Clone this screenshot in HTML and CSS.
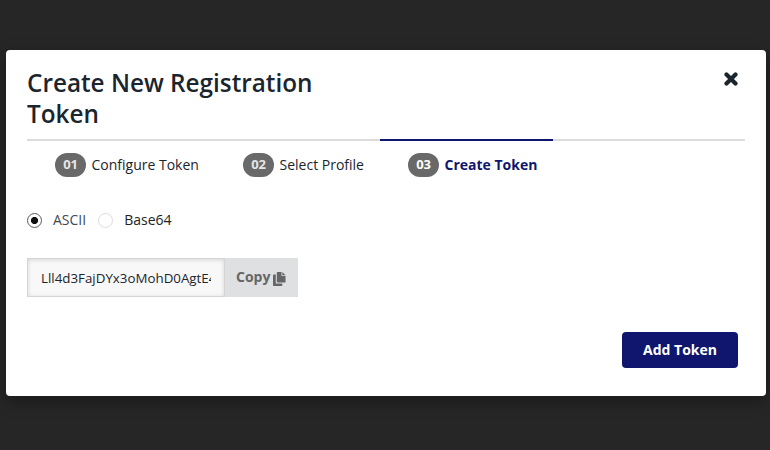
FILE: index.html
```html
<!DOCTYPE html>
<html lang="en">
<head>
<meta charset="utf-8">
<title>Create New Registration Token</title>
<link rel="stylesheet" href="styles.css">
</head>
<body>
<main class="modal">
  <header class="header">
    <h1 class="title">Create New Registration Token</h1>
    <button class="close" aria-label="Close"><svg width="14" height="14" viewBox="0 0 14 14"><path d="M2.500 2.500 11.500 11.500M11.500 2.500 2.500 11.500" stroke="#1b252d" stroke-width="4.200" stroke-linecap="round"/></svg></button>
  </header>
  <ol class="steps">
    <li class="step step-one"><span class="num">01</span><span class="label">Configure Token</span></li>
    <li class="step step-two"><span class="num">02</span><span class="label">Select Profile</span></li>
    <li class="step step-three active"><span class="num">03</span><span class="label">Create Token</span></li>
    <li class="rest"></li>
  </ol>
  <div class="formats">
    <span class="radio checked"></span><span class="format selected">ASCII</span>
    <span class="radio"></span><span class="format">Base64</span>
  </div>
  <div class="token">
    <div class="field"><span class="value">Lll4d3FajDYx3oMohD0AgtE4</span></div>
    <button class="copy"><span>Copy</span><svg width="13" height="14" viewBox="0 0 13 14" fill="#666"><path d="M4.500 0H8.500V4H12.500V10.500H4.500Q3.800 10.500 3.800 9.800V.7Q3.800 0 4.500 0Z"/><path d="M9.300 0 12.500 3.200H9.300Z"/><path d="M.8 2.500H2.800V11.500H9.300V13.200Q9.300 14 8.500 14H.8Q0 14 0 13.200V3.300Q0 2.500 .8 2.500Z"/></svg></button>
  </div>
  <footer class="footer"><button class="add">Add Token</button></footer>
</main>
</body>
</html>
```
FILE: styles.css
```css
* { box-sizing: border-box; }
body {
  margin: 0;
  height: 450px;
  overflow: hidden;
  padding: 50px 4px 54px 6px;
  background: #262626;
  color: #1b252d;
  font: 14px/20px "Open Sans", sans-serif;
}
button { border: 0; padding: 0; font: inherit; }
.modal {
  height: 346px;
  padding: 17px 21px 0;
  background: #fff;
  border-radius: 4px;
  box-shadow: 0 5px 15px rgba(0, 0, 0, .35);
}
.header { display: flex; justify-content: space-between; height: 72px; }
.title { margin: 0; width: 310px; font-size: 24.300px; line-height: 31px; font-weight: 600; }
.close { height: 14px; margin: 5px 7px 0 0; background: none; }
.close svg { display: block; }
.steps { display: flex; height: 38px; margin: 0; padding: 0; list-style: none; }
.step {
  display: flex;
  align-items: flex-start;
  gap: 5.5px;
  padding: 12px 0 0 28px;
  border-top: 2px solid #dcdcdc;
  white-space: nowrap;
}
.step-one { width: 188px; }
.step-two { width: 165px; }
.step-three { width: 173px; }
.rest { flex: 1; border-top: 2px solid #dcdcdc; }
.num {
  width: 31px;
  height: 24px;
  border-radius: 12px;
  background: #696969;
  color: #e6e6e6;
  font-size: 13px;
  font-weight: 700;
  line-height: 23px;
  text-align: center;
  letter-spacing: -.3px;
}
.label { line-height: 24px; }
.active { border-color: #10166e; }
.active .num { color: #fff; }
.active .label { color: #10166e; font-weight: 700; }
.formats { display: flex; align-items: center; height: 20px; margin-top: 33px; }
.radio { width: 15px; height: 15px; border: 1px solid #ddd; border-radius: 50%; }
.radio.checked { border-color: #555c62; background: radial-gradient(circle, #111 3.2px, #fff 3.9px); }
.format { margin-left: 11px; color: #222; }
.format.selected { margin-right: 12px; color: #414a55; }
.token { display: flex; width: 271px; height: 39px; margin-top: 28px; }
.field {
  width: 198px;
  padding: 0 13px;
  background: #f8f8f8;
  border: 1px solid #d5d5d5;
  box-shadow: inset 0 1px 4px rgba(0, 0, 0, .14);
  font-size: 13.333px;
  line-height: 38px;
}
.value { display: block; overflow: hidden; white-space: nowrap; }
.copy {
  display: flex;
  flex: 1;
  align-items: center;
  padding: 0 0 1px 11px;
  background: #dfe0e2;
  color: #666;
  font-weight: 700;
}
.copy svg { margin: 4px 0 0 3px; }
.footer { display: flex; justify-content: flex-end; margin: 35px 7px 0 0; }
.add { width: 116px; height: 36px; border-radius: 4px; background: #10166e; color: #fff; font-weight: 700; }
```
